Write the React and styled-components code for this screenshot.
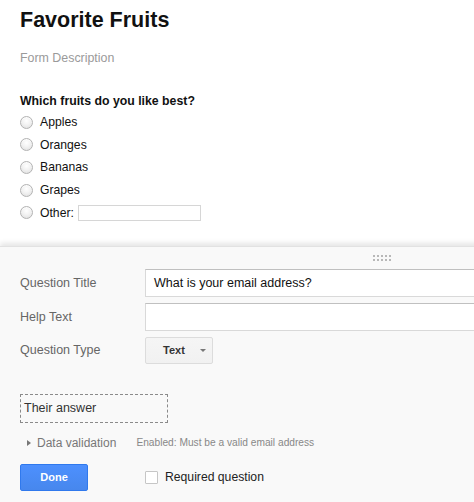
import React from "react";
import styled, { createGlobalStyle } from "styled-components";

const GlobalStyle = createGlobalStyle`
  html, body {
    margin: 0;
    padding: 0;
    background: #ffffff;
    overflow: hidden;
  }
  body {
    font-family: "Liberation Sans", Arial, Helvetica, sans-serif;
    color: #222;
  }
  * { box-sizing: border-box; }
`;

const Page = styled.div`
  width: 474px;
  height: 502px;
  overflow: hidden;
`;

const Header = styled.section`
  padding: 7px 20px 0;
`;

const Title = styled.h1`
  margin: 0;
  font-size: 21.5px;
  line-height: 26px;
  font-weight: bold;
  color: #111;
`;

const Description = styled.div`
  margin-top: 17px;
  font-size: 12.4px;
  line-height: 16px;
  color: #9a9a9a;
`;

const QuestionText = styled.div`
  margin-top: 27px;
  font-size: 12.3px;
  line-height: 16px;
  font-weight: bold;
  color: #111;
`;

const OptionList = styled.div`
  display: flex;
  flex-direction: column;
  margin-top: 2px;
`;

const OptionRow = styled.label`
  display: flex;
  align-items: center;
  height: 22.6px;
  gap: 7px;
  font-size: 12.2px;
  color: #111;
`;

const Radio = styled.span`
  width: 13px;
  height: 13px;
  border-radius: 50%;
  border: 1px solid #b3b3b3;
  background: radial-gradient(circle at 50% 35%, #ffffff 0%, #f2f2f2 45%, #dcdcdc 100%);
  box-shadow: inset 0 1px 1px rgba(255,255,255,0.8);
  flex: none;
`;

const OtherInput = styled.span`
  display: block;
  width: 123px;
  height: 16px;
  border: 1px solid #d6d6d6;
  background: #fff;
  margin-left: -3px;
`;

const PanelClip = styled.div`
  margin-top: 22px;
  width: 474px;
`;

const Panel = styled.div`
  width: 762px;
  min-height: 300px;
  background: #f9f9f9;
  border-top: 1px solid #e2e2e2;
  box-shadow: 0 -3px 5px rgba(0, 0, 0, 0.1);
`;

const HandleBar = styled.div`
  height: 22px;
  display: flex;
  justify-content: center;
  align-items: center;
`;

const Handle = styled.div`
  width: 19px;
  height: 7px;
  background-image: radial-gradient(circle, #b8b8b8 0.8px, transparent 1px);
  background-size: 4px 4px;
  background-position: 0 -1px;
  margin-top: 2px;
`;

const Fields = styled.div`
  display: grid;
  grid-template-columns: 125px 440px;
  row-gap: 6px;
  padding-left: 20px;
  align-items: center;
`;

const FieldLabel = styled.div`
  font-size: 12.5px;
  color: #666;
`;

const TextInput = styled.div`
  height: 28px;
  display: flex;
  align-items: center;
  padding-left: 8px;
  background: #fff;
  border: 1px solid #d9d9d9;
  border-top-color: #c0c0c0;
  font-size: 12.5px;
  color: #111;
`;

const SelectButton = styled.div`
  width: 68px;
  height: 27px;
  display: flex;
  align-items: center;
  justify-content: space-between;
  padding: 0 6px 0 17px;
  background: linear-gradient(#f5f5f5, #f1f1f1);
  border: 1px solid #dcdcdc;
  border-radius: 2px;
  font-size: 11px;
  font-weight: bold;
  color: #333;
`;

const Caret = styled.span`
  width: 0;
  height: 0;
  border-left: 3px solid transparent;
  border-right: 3px solid transparent;
  border-top: 3.5px solid #777;
`;

const Preview = styled.div`
  margin: 30px 0 0 20px;
  width: 148px;
  height: 29px;
  display: flex;
  align-items: center;
  padding-left: 3px;
  border: 1px dashed #8a8a8a;
  font-size: 12.5px;
  color: #333;
`;

const Validation = styled.div`
  margin-top: 10px;
  height: 20px;
  display: flex;
  align-items: center;
  padding-left: 27px;
`;

const Arrow = styled.span`
  width: 0;
  height: 0;
  border-top: 3px solid transparent;
  border-bottom: 3px solid transparent;
  border-left: 4px solid #777;
  margin-right: 6px;
`;

const ValidationLabel = styled.span`
  font-size: 12px;
  color: #777;
`;

const ValidationNote = styled.span`
  margin-left: 20px;
  font-size: 10.2px;
  color: #888;
`;

const Footer = styled.div`
  margin-top: 11px;
  display: grid;
  grid-template-columns: 125px auto;
  padding-left: 20px;
  align-items: center;
`;

const DoneButton = styled.button`
  width: 68px;
  height: 27px;
  border: 1px solid #3079ed;
  border-radius: 2px;
  background: linear-gradient(#4d90fe, #4787ed);
  color: #fff;
  font-family: inherit;
  font-size: 11px;
  font-weight: bold;
  padding: 0;
`;

const CheckRow = styled.label`
  display: flex;
  align-items: center;
  gap: 7px;
  font-size: 12.2px;
  color: #222;
`;

const CheckBox = styled.span`
  width: 13px;
  height: 13px;
  border: 1px solid #c6c6c6;
  border-radius: 1px;
  background: #fff;
  flex: none;
`;

const options = ["Apples", "Oranges", "Bananas", "Grapes"];

export default function App() {
  return (
    <Page>
      <GlobalStyle />
      <Header>
        <Title>Favorite Fruits</Title>
        <Description>Form Description</Description>
        <QuestionText>Which fruits do you like best?</QuestionText>
        <OptionList>
          {options.map((o) => (
            <OptionRow key={o}>
              <Radio />
              {o}
            </OptionRow>
          ))}
          <OptionRow>
            <Radio />
            Other:
            <OtherInput />
          </OptionRow>
        </OptionList>
      </Header>
      <PanelClip>
        <Panel>
          <HandleBar>
            <Handle />
          </HandleBar>
          <Fields>
            <FieldLabel>Question Title</FieldLabel>
            <TextInput>What is your email address?</TextInput>
            <FieldLabel>Help Text</FieldLabel>
            <TextInput />
            <FieldLabel>Question Type</FieldLabel>
            <SelectButton>
              Text
              <Caret />
            </SelectButton>
          </Fields>
          <Preview>Their answer</Preview>
          <Validation>
            <Arrow />
            <ValidationLabel>Data validation</ValidationLabel>
            <ValidationNote>Enabled: Must be a valid email address</ValidationNote>
          </Validation>
          <Footer>
            <DoneButton>Done</DoneButton>
            <CheckRow>
              <CheckBox />
              Required question
            </CheckRow>
          </Footer>
        </Panel>
      </PanelClip>
    </Page>
  );
}
